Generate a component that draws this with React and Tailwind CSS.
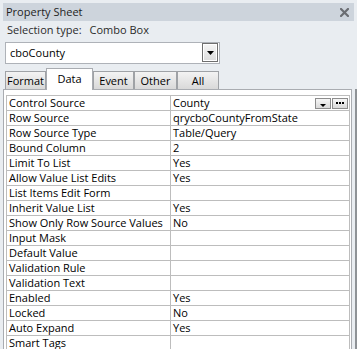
import React from "react";

const rows = [
  ["Control Source", "County"],
  ["Row Source", "qrycboCountyFromState"],
  ["Row Source Type", "Table/Query"],
  ["Bound Column", "2"],
  ["Limit To List", "Yes"],
  ["Allow Value List Edits", "Yes"],
  ["List Items Edit Form", ""],
  ["Inherit Value List", "Yes"],
  ["Show Only Row Source Values", "No"],
  ["Input Mask", ""],
  ["Default Value", ""],
  ["Validation Rule", ""],
  ["Validation Text", ""],
  ["Enabled", "Yes"],
  ["Locked", "No"],
  ["Auto Expand", "Yes"],
  ["Smart Tags", ""],
];

function Tab({ label, active, w }) {
  if (active) {
    return (
      <div
        className={`${w} h-[22px] -mb-[1px] relative z-10 bg-white border border-b-0 border-[#a9acb1] flex items-center justify-center pb-[2px]`}
      >
        {label}
      </div>
    );
  }
  return (
    <div
      className={`${w} h-[18px] bg-gradient-to-b from-[#f3f3f3] to-[#d9d9d9] border border-b-0 border-[#9fa2a6] flex items-center justify-center`}
    >
      {label}
    </div>
  );
}

export default function App() {
  return (
    <div className="w-[357px] h-[349px] overflow-hidden bg-[#e9edf1] font-['Open_Sans',sans-serif] text-[11px] text-black flex flex-col pt-[3px] pl-[3px] leading-[14px]">
      {/* Title bar */}
      <div className="w-[351px] h-[18px] shrink-0 bg-[#cdd4dc] flex items-center justify-between pl-[3px] pr-[5px] text-[#1e1e1e]">
        <span>Property Sheet</span>
        <svg width="9" height="9" viewBox="0 0 9 9">
          <path d="M1 1 L8 8 M8 1 L1 8" stroke="#6a6d72" strokeWidth="2.2" strokeLinecap="square" />
        </svg>
      </div>
      {/* Selection type */}
      <div className="h-[18px] shrink-0 flex items-center pl-[4px] text-[#2b2b2b]">
        <span>Selection type:</span>
        <span className="ml-[8px]">Combo Box</span>
      </div>
      {/* Combo */}
      <div className="mt-[3px] ml-[2px] w-[215px] h-[22px] shrink-0 bg-white border border-[#aeb2b8] flex items-start justify-between pl-[4px] pr-[1px]">
        <span className="self-center">cboCounty</span>
        <div className="w-[16px] h-[19px] border border-[#6f6f6f] bg-gradient-to-b from-[#f6f6f6] to-[#dcdcdc] shadow-[inset_0_0_0_1px_#ffffff] flex items-center justify-center">
          <svg width="7" height="4" viewBox="0 0 7 4">
            <path d="M0 0 H7 L3.5 4 Z" fill="#000" />
          </svg>
        </div>
      </div>
      {/* Tabs */}
      <div className="mt-[4px] ml-[2px] h-[21px] shrink-0 flex items-end">
        <Tab label="Format" w="w-[41px]" />
        <Tab label="Data" w="w-[47px]" active />
        <Tab label="Event" w="w-[41px]" />
        <Tab label="Other" w="w-[43px]" />
        <Tab label="All" w="w-[42px]" />
      </div>
      {/* Panel + right frame line */}
      <div className="flex-1 flex items-stretch">
        <div className="w-[349px] bg-white border border-b-0 border-[#a9acb1] pt-[5px] pl-[2px] pr-[1px]">
          <div className="w-[344px] border-t border-l border-[#bdbdbd]">
            {rows.map(([k, v], i) => (
              <div key={k} className="grid grid-cols-[164px_179px] h-[15px]">
                <div className="border-b border-r border-[#bdbdbd] pl-[2px] whitespace-nowrap overflow-hidden">
                  {k}
                </div>
                <div className="border-b border-r border-[#bdbdbd] pl-[2px] pr-[1px] whitespace-nowrap overflow-hidden flex items-center">
                  <span>{v}</span>
                  {i === 0 && (
                    <div className="ml-auto flex gap-[1px]">
                      <div className="w-[16px] h-[11px] border border-[#8d8d8d] bg-gradient-to-b from-[#f7f7f7] to-[#dadada] flex items-end justify-center pb-[1px]">
                        <svg width="6" height="3" viewBox="0 0 6 3">
                          <path d="M0 0 H6 L3 3 Z" fill="#000" />
                        </svg>
                      </div>
                      <div className="w-[16px] h-[11px] border border-[#8d8d8d] bg-gradient-to-b from-[#f7f7f7] to-[#dadada] flex items-center justify-center">
                        <svg width="8" height="2" viewBox="0 0 8 2">
                          <rect x="0" y="0" width="2" height="2" fill="#000" />
                          <rect x="3" y="0" width="2" height="2" fill="#000" />
                          <rect x="6" y="0" width="2" height="2" fill="#000" />
                        </svg>
                      </div>
                    </div>
                  )}
                </div>
              </div>
            ))}
          </div>
        </div>
        <div className="ml-[3px] w-[2px] bg-[#8e9296]" />
      </div>
    </div>
  );
}
